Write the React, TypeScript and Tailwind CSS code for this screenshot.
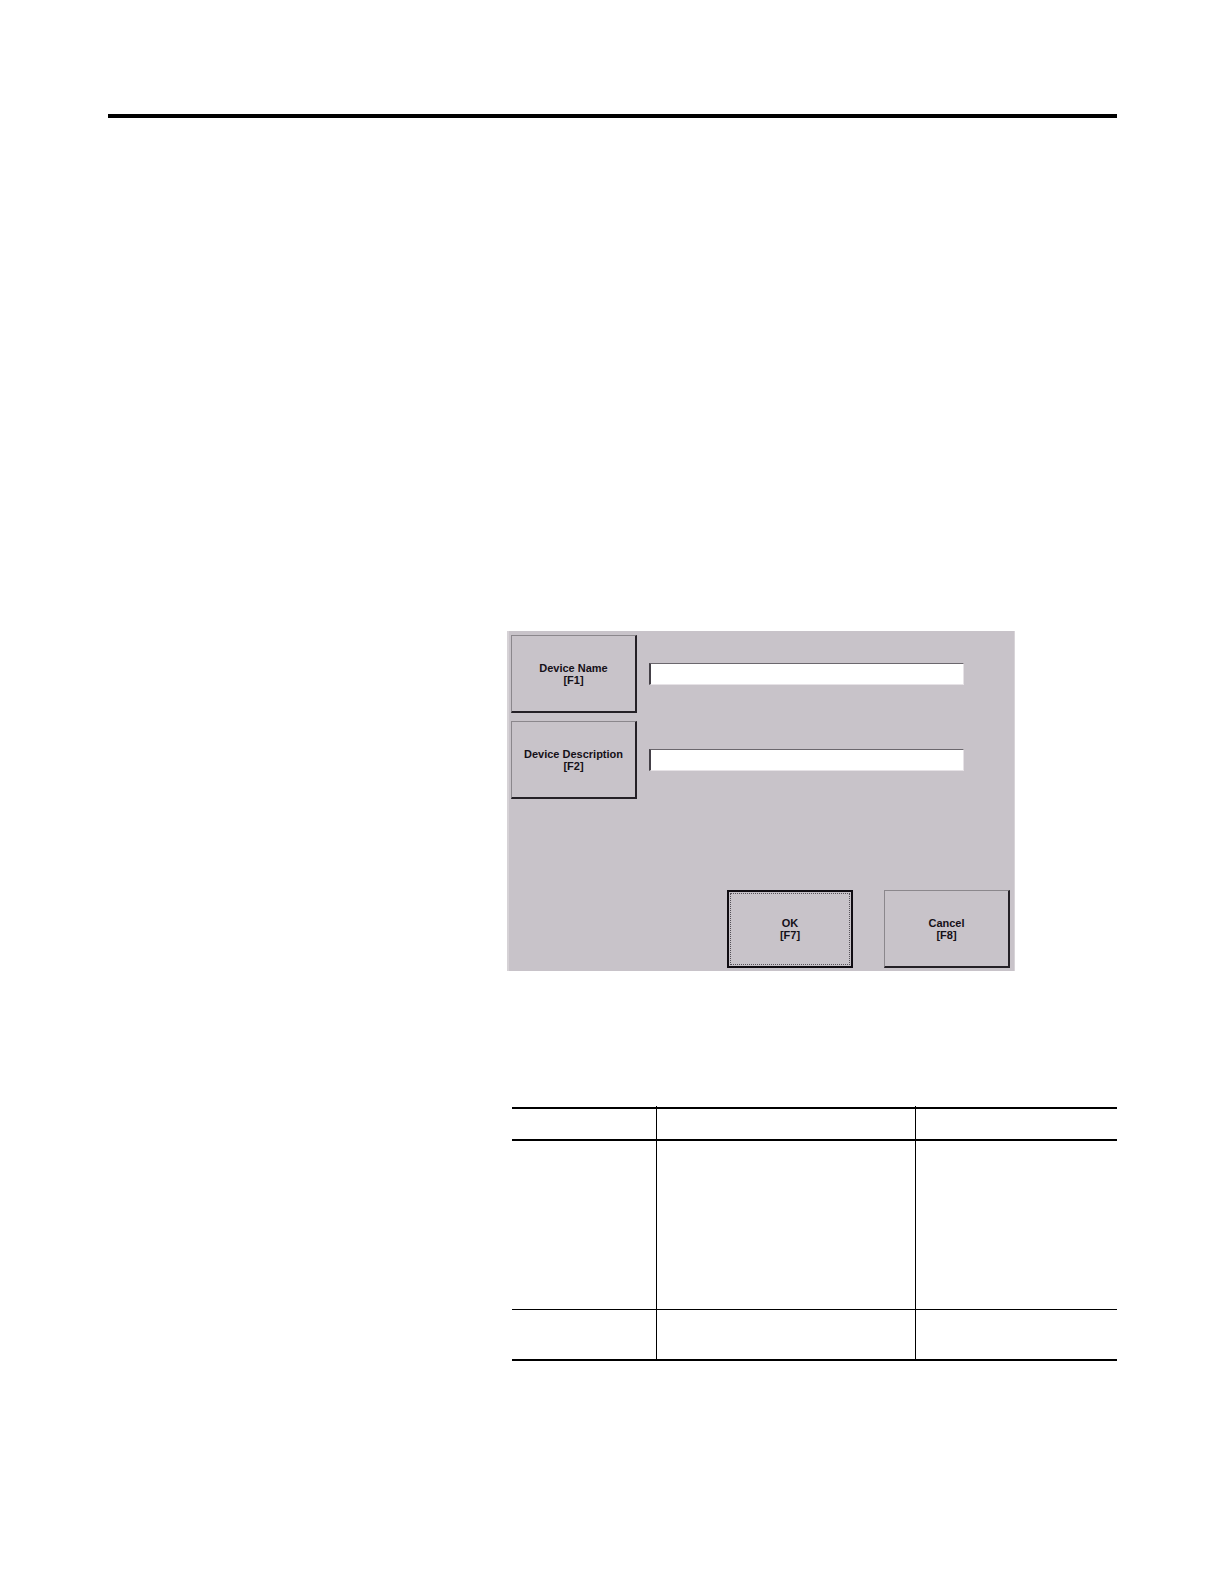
import type { ReactNode } from "react";

const keyFace =
  "h-[78px] w-[126px] shrink-0 text-center text-[11px] leading-3 font-bold text-[#151018]";
const raised =
  "border-t border-l border-r-2 border-b-2 border-t-[#8b878c] border-l-[#8b878c] border-r-[#242026] border-b-[#242026]";

function SoftKey({ label, fkey }: { label: string; fkey: string }) {
  return (
    <button type="button" className={`${keyFace} ${raised}`}>
      {label}
      <br />[{fkey}]
    </button>
  );
}

function DefaultKey({ label, fkey }: { label: string; fkey: string }) {
  return (
    <button type="button" className={`${keyFace} border-2 border-[#100c12] p-px`}>
      <span className="flex h-full items-center justify-center border border-dotted border-[#555158]">
        <span>
          {label}
          <br />[{fkey}]
        </span>
      </span>
    </button>
  );
}

function Field({ label }: { label: string }) {
  return (
    <input
      type="text"
      aria-label={label}
      className="h-[22px] min-w-0 flex-1 border-t border-r border-b border-l-2 border-t-[#6b676d] border-r-[#e6e2e6] border-b-[#e6e2e6] border-l-[#444047] bg-white px-1 text-[11px] outline-none"
    />
  );
}

function Row({ children }: { children: ReactNode }) {
  return <div className="flex items-center gap-3 pr-[46px]">{children}</div>;
}

function DeviceDialog() {
  return (
    <form
      className="max-w-[508px] border-r border-l-2 border-r-[#d8d4d8] border-l-[#d6d2d6] bg-[#c8c3c9] pt-1 pr-1 pb-[3px] pl-[2px] font-['Liberation_Sans',sans-serif]"
      aria-label="Device"
    >
      <div className="flex flex-col gap-2">
        <Row>
          <SoftKey label="Device Name" fkey="F1" />
          <Field label="Device Name" />
        </Row>
        <Row>
          <SoftKey label="Device Description" fkey="F2" />
          <Field label="Device Description" />
        </Row>
      </div>
      <div className="mt-[91px] flex justify-end gap-[31px]">
        <DefaultKey label="OK" fkey="F7" />
        <SoftKey label="Cancel" fkey="F8" />
      </div>
    </form>
  );
}

const head =
  "relative h-[34px] border-y-2 border-black before:absolute before:-top-[3px] before:-left-px before:h-px before:w-px before:bg-black";

function FieldTable() {
  return (
    <table className="w-full table-fixed border-separate border-spacing-0">
      <colgroup>
        <col className="w-[144px]" />
        <col className="w-[259px]" />
        <col />
      </colgroup>
      <thead>
        <tr>
          <th className="h-[34px] border-y-2 border-black" />
          <th className={`${head} border-l`} />
          <th className={`${head} border-l`} />
        </tr>
      </thead>
      <tbody>
        <tr>
          <td className="h-[169px] border-b border-black" />
          <td className="border-b border-l border-black" />
          <td className="border-b border-l border-black" />
        </tr>
        <tr>
          <td className="h-[51px] border-b-2 border-black" />
          <td className="border-b-2 border-l border-black" />
          <td className="border-b-2 border-l border-black" />
        </tr>
      </tbody>
    </table>
  );
}

export default function App() {
  return (
    <main className="min-h-screen bg-white pt-[114px] pr-[107px] pb-16 pl-[108px]">
      <hr className="border-t-4 border-black" />
      <div className="mt-[513px] ml-[399px]">
        <DeviceDialog />
      </div>
      <div className="mt-[136px] ml-[404px]">
        <FieldTable />
      </div>
    </main>
  );
}
